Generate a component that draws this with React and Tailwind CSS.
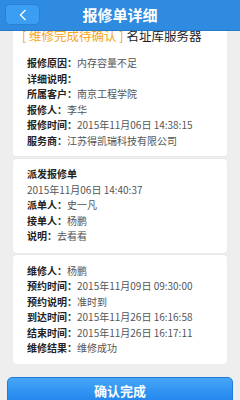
import React from 'react';

const font = { fontFamily: '"Noto Sans CJK SC", "Noto Sans", sans-serif' };

function Row({ label, value }) {
  return (
    <div className="flex h-[15.5px] items-center whitespace-nowrap text-[10px] leading-[15.5px]">
      <span className="font-bold text-[#222]">{label}</span>
      <span className="text-[#555]">{value}</span>
    </div>
  );
}

function Card({ children, className = '' }) {
  return (
    <div className={`mx-[13px] rounded-[3px] bg-white px-[14px] shadow-[0_0_1px_rgba(0,0,0,0.15)] ${className}`}>
      {children}
    </div>
  );
}

export default function App() {
  return (
    <div className="flex h-[400px] w-[240px] flex-col overflow-hidden bg-[#eeeeee]" style={font}>
      {/* header */}
      <div className="relative z-10 flex h-[31px] shrink-0 items-center justify-center bg-[#2f8be0] border-b border-[#2878c8]">
        <button className="absolute left-[5px] top-[4px] flex h-[21px] w-[35px] items-center justify-center rounded-[5px] border border-[#2a7fd6] bg-[#3c9ef2]">
          <svg width="8" height="12" viewBox="0 0 8 12" fill="none">
            <path d="M6.5 1 L1.5 6 L6.5 11" stroke="white" strokeWidth="1.3" />
          </svg>
        </button>
        <h1 className="text-[15px] font-bold text-white">报修单详细</h1>
      </div>

      {/* scrolled content */}
      <div className="flex-1 overflow-hidden">
        <div className="-mt-[11px] flex flex-col gap-[3px]">
          <Card className="pt-[6px] pb-[8px]">
            <div className="flex h-[20px] items-center whitespace-nowrap text-[12.5px] -ml-[5px]">
              <span className="text-[#f5a623]">[ 维修完成待确认 ]</span>
              <span className="ml-[3px] text-[#222]">名址库服务器</span>
            </div>
            <div className="mt-[9px]">
              <Row label="报修原因：" value="内存容量不足" />
              <Row label="详细说明：" value="" />
              <Row label="所属客户：" value="南京工程学院" />
              <Row label="报修人：" value="李华" />
              <Row label="报修时间：" value="2015年11月06日 14:38:15" />
              <Row label="服务商：" value="江苏得凯瑞科技有限公司" />
            </div>
          </Card>

          <Card className="pt-[7px] pb-[9px]">
            <Row label="派发报修单" value="" />
            <div className="flex h-[15.5px] items-center whitespace-nowrap text-[10px] text-[#555]">
              2015年11月06日 14:40:37
            </div>
            <Row label="派单人：" value="史一凡" />
            <Row label="接单人：" value="杨鹏" />
            <Row label="说明：" value="去看看" />
          </Card>

          <Card className="mt-[-1px] pt-[8px] pb-[8px]">
            <Row label="维修人：" value="杨鹏" />
            <Row label="预约时间：" value="2015年11月09日 09:30:00" />
            <Row label="预约说明：" value="准时到" />
            <Row label="到达时间：" value="2015年11月26日 16:16:58" />
            <Row label="结束时间：" value="2015年11月26日 16:17:11" />
            <Row label="维修结果：" value="维修成功" />
          </Card>
        </div>
      </div>

      {/* bottom button */}
      <div className="h-[23px] shrink-0 overflow-hidden px-[7px]">
        <button className="flex h-[28px] w-full items-start justify-center rounded-[5px] border border-[#1f7ad8] bg-gradient-to-b from-[#45a6f7] to-[#1c82ec] pt-[3px] text-[13px] font-bold text-white">
          确认完成
        </button>
      </div>
    </div>
  );
}
